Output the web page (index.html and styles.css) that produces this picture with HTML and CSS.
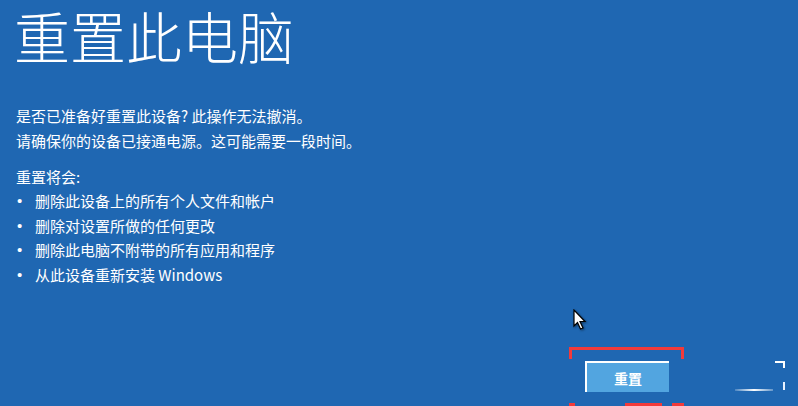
FILE: index.html
```html
<!DOCTYPE html>
<html lang="zh-CN">
<head>
<meta charset="utf-8">
<title>重置此电脑</title>
<link rel="stylesheet" href="styles.css">
</head>
<body>
<div class="screen">
  <h1 class="title">重置此电脑</h1>
  <p class="intro">是否已准备好重置此设备? 此操作无法撤消。<br>请确保你的设备已接通电源。这可能需要一段时间。</p>
  <p class="lead">重置将会:</p>
  <ul class="list">
    <li><span class="dot">•</span><span>删除此设备上的所有个人文件和帐户</span></li>
    <li><span class="dot">•</span><span>删除对设置所做的任何更改</span></li>
    <li><span class="dot">•</span><span>删除此电脑不附带的所有应用和程序</span></li>
    <li><span class="dot">•</span><span>从此设备重新安装 Windows</span></li>
  </ul>
  <div class="footer">
    <button class="btn primary">重置</button>
    <div class="btn ghost"><span class="ghost-line"></span></div>
  </div>
  <div class="mark"><span class="seg s1"></span><span class="seg s2"></span><span class="seg s3"></span></div>
  <svg class="cursor" width="14" height="22" viewBox="0 0 14 22">
    <path d="M1 1 L1 17 L4.5 13.5 L7.5 20 L10 19 L7 12.5 L12 12.5 Z" fill="#fff" stroke="#000" stroke-width="1.2" stroke-linejoin="miter"/>
  </svg>
</div>
</body>
</html>
```

FILE: styles.css
```css
html, body {
  margin: 0;
  padding: 0;
  background: #1f67b2;
}
body {
  font-family: "Noto Sans CJK SC", "Noto Sans", sans-serif;
  color: #fff;
}
.screen {
  position: relative;
  width: 798px;
  height: 406px;
  box-sizing: border-box;
  padding: 1px 13px 0 16px;
  display: flex;
  flex-direction: column;
  overflow: hidden;
}
.title {
  margin: 0 0 0 -2px;
  font-size: 56px;
  line-height: 68px;
  font-weight: 300;
}
.intro {
  margin: 34px 0 0 0;
  font-size: 15px;
  line-height: 25px;
}
.lead {
  margin: 11px 0 0 0;
  font-size: 15px;
  line-height: 25px;
}
.list {
  list-style: none;
  margin: 0;
  padding: 0;
  font-size: 15px;
  line-height: 24.7px;
}
.list li {
  display: flex;
}
.dot {
  width: 18px;
  padding-left: 1px;
  font-family: "Liberation Sans", sans-serif;
  font-size: 15px;
}
.footer {
  margin-top: auto;
  margin-bottom: 14px;
  display: flex;
  justify-content: flex-end;
  gap: 32px;
}
.btn {
  width: 84px;
  height: 31px;
  box-sizing: border-box;
}
.primary {
  background: #52a5e0;
  border: none;
  border-top: 2px solid #fff;
  border-left: 2px solid #fff;
  color: #fff;
  font-family: "Noto Sans CJK SC", sans-serif;
  font-size: 14px;
  font-weight: 700;
  padding: 0;
}
.ghost {
  position: relative;
}
.ghost::before {
  content: "";
  position: absolute;
  right: 0;
  top: 0;
  width: 8px;
  height: 5px;
  border-top: 2px solid #fff;
  border-right: 2px solid #fff;
}
.ghost::after {
  content: "";
  position: absolute;
  right: 0;
  top: 21px;
  width: 2px;
  height: 8px;
  background: #e8f2ff;
}
.ghost-line {
  position: absolute;
  left: 34px;
  right: 12px;
  bottom: 1px;
  height: 2px;
  background: linear-gradient(90deg, rgba(255,255,255,0.2), #fff 50%, rgba(255,255,255,0.3));
}
.mark {
  position: absolute;
  left: 569px;
  top: 347px;
  width: 115px;
  height: 60px;
  box-sizing: border-box;
}
.mark::before {
  content: "";
  position: absolute;
  left: 0;
  top: 0;
  right: 0;
  height: 9px;
  border: 3px solid #f23a3a;
  border-bottom: none;
}
.seg {
  position: absolute;
  top: 56px;
  height: 3px;
  background: #f23a3a;
}
.s1 { left: 0; width: 6px; }
.s2 { left: 56px; width: 37px; }
.s3 { left: 103px; width: 12px; }
.cursor {
  position: absolute;
  left: 573px;
  top: 309px;
  filter: drop-shadow(1px 1px 1px rgba(0,0,0,0.45));
}
```
